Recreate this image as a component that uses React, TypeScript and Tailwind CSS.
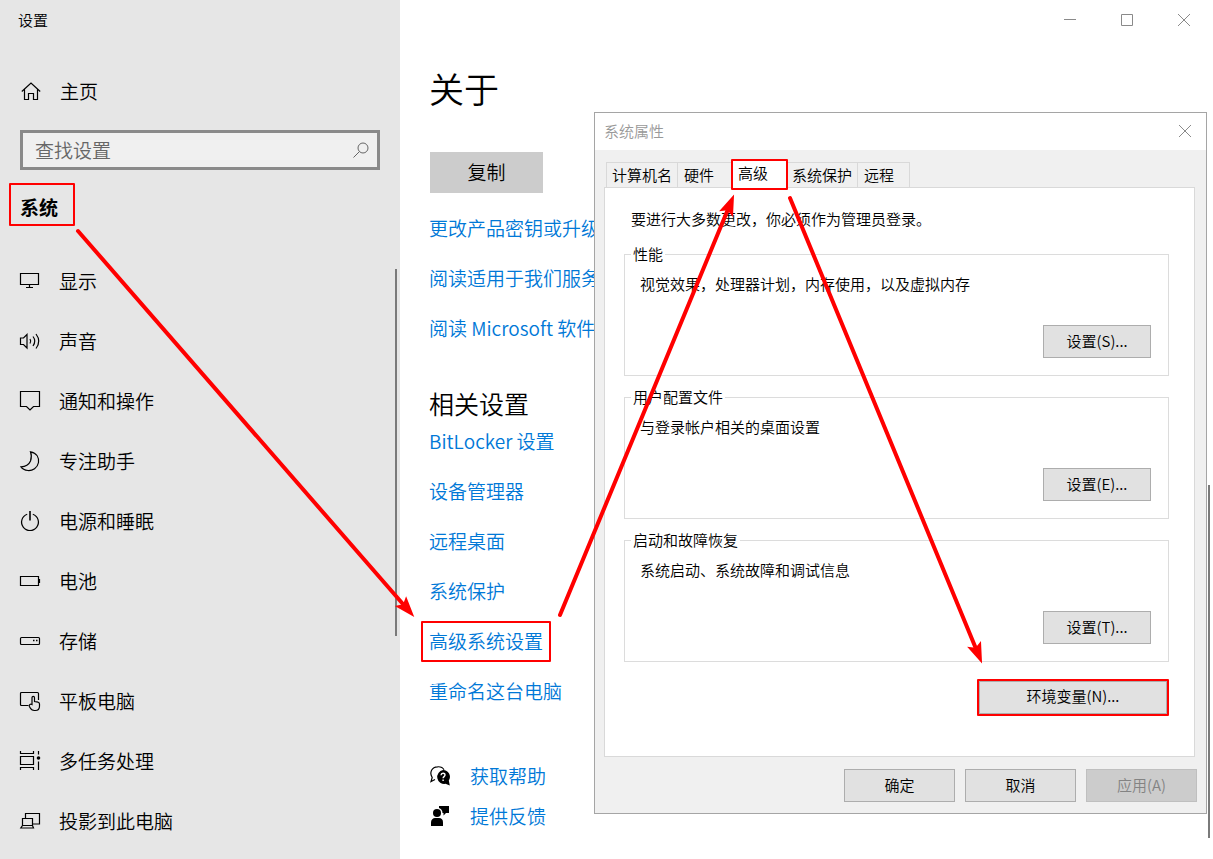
import type { ReactNode } from 'react';

const navItems: { label: string; icon: ReactNode }[] = [
  {
    label: '显示',
    icon: (
      <>
        <path d="M.5 2.500h18v11H.5z" />
        <path d="M9.500 13.500v3M6 16.500h7" />
      </>
    ),
  },
  {
    label: '声音',
    icon: (
      <>
        <path d="M.5 7v6.500h3L7 17V3.500L3.500 7z" />
        <path d="M10 8q1.500 2.200 0 4.500M13 5.500q3.500 4.500 0 9.500M16 3q5.500 7.200 0 14.500" />
      </>
    ),
  },
  { label: '通知和操作', icon: <path d="M.5.5h19v15h-6L10 19l-3.500-3.500h-6z" /> },
  {
    label: '专注助手',
    icon: (
      <path d="M10.500.8C17 2 19 7 18.500 11.500 17.500 17 12.500 19.800 8 19.500 5 19 2.500 18 1 15.800 6 15.800 9 13.500 10.500 10c1.300-3.300 1-6.500 0-9.200z" />
    ),
  },
  {
    label: '电源和睡眠',
    icon: (
      <>
        <path d="M7.200 3.200a8.400 8.400 0 1 0 5.600 0" />
        <path d="M10 0v9.500" strokeWidth="1.600" />
      </>
    ),
  },
  {
    label: '电池',
    icon: (
      <>
        <path d="M.5 5.500h18v9H.5z" />
        <path d="M19.500 8v4" />
      </>
    ),
  },
  {
    label: '存储',
    icon: (
      <>
        <rect x=".5" y="6.500" width="19" height="7" rx="1" />
        <path d="M13 9.500h1.500M16 9.500h1.500" strokeWidth="1.500" />
      </>
    ),
  },
  {
    label: '平板电脑',
    icon: (
      <>
        <path d="M8.500 14.500h-7a1 1 0 0 1-1-1v-11a1 1 0 0 1 1-1h16a1 1 0 0 1 1 1V9" />
        <path d="M12 13.500V6.800c0-1.900 2.500-1.900 2.500 0v3.700l3.600.7c1 .3 1.400.9 1.400 1.700v2.300c0 2.500-1.700 4.300-4.200 4.300h-1c-2 0-3.300-.9-4.200-2.700l-.8-1.600c-.5-1.500 1.200-2.500 2.700-1.700z" />
      </>
    ),
  },
  {
    label: '多任务处理',
    icon: (
      <>
        <path d="M.5 0v2.500h13V0M.5 5.500h13v8H.5zM.5 19v-2.500h13V19" />
        <path d="M18.500 0v3.500M18.500 10.500V19" />
        <circle cx="18.500" cy="7" r="1.800" fill="currentColor" stroke="none" />
      </>
    ),
  },
  {
    label: '投影到此电脑',
    icon: (
      <>
        <path d="M5.500 7.500v-5h14v10.500H13" />
        <path d="M2.500 14.500v-7H12.500v7M2.500 14.500h10l1 2.500H.8z" />
      </>
    ),
  },
];

const infoLinks = ['更改产品密钥或升级', '阅读适用于我们服务', '阅读 Microsoft 软件'];

const relatedLinks = ['BitLocker 设置', '设备管理器', '远程桌面', '系统保护', '高级系统设置', '重命名这台电脑'];

const groups = [
  { title: '性能', text: '视觉效果，处理器计划，内存使用，以及虚拟内存', button: '设置(S)...' },
  { title: '用户配置文件', text: '与登录帐户相关的桌面设置', button: '设置(E)...' },
  { title: '启动和故障恢复', text: '系统启动、系统故障和调试信息', button: '设置(T)...' },
];

function LineIcon({ children }: { children: ReactNode }) {
  return (
    <svg
      className="h-5 w-5 shrink-0 overflow-visible"
      viewBox="0 0 20 20"
      fill="none"
      stroke="currentColor"
      strokeWidth="1.200"
      aria-hidden="true"
    >
      {children}
    </svg>
  );
}

function CloseIcon() {
  return (
    <svg className="h-3 w-3" viewBox="0 0 12 12" fill="none" stroke="#8a8a8a" aria-hidden="true">
      <path d="M0 0l12 12M12 0L0 12" />
    </svg>
  );
}

function Sidebar() {
  return (
    <aside className="relative w-[400px] shrink-0 bg-[#e6e6e6]">
      <div className="flex h-10 items-center px-[18px] text-[15px]">设置</div>

      <a href="#home" className="mt-[21px] flex h-[60px] items-center gap-[19px] px-[21px]">
        <LineIcon>
          <path d="M.8 10.500 10 2l9.200 8.500M3.500 8.500v10h4V12.500h5v6h4v-10" />
        </LineIcon>
        主页
      </a>

      <div className="relative mx-5 mt-[9px]">
        <input
          id="search"
          type="text"
          placeholder="查找设置"
          className="block h-10 w-full border-3 border-[#8a8a8a] bg-[#f0f0f0] px-3 pb-[2px] placeholder:text-[#666] focus:outline-none"
        />
        <label htmlFor="search" aria-label="查找设置" className="absolute top-3 right-[11px]">
          <svg className="h-4 w-4" viewBox="0 0 16 16" fill="none" stroke="#666" aria-hidden="true">
            <circle cx="10" cy="6" r="5" />
            <path d="M6.500 9.500.5 15.500" />
          </svg>
        </label>
      </div>

      <h2 className="mt-[13px] mb-[25px] ml-[9px] flex h-[43px] w-[66px] items-center rounded-[1px] border-2 border-[#f00] px-[9px] pt-1 font-bold">
        系统
      </h2>

      <nav>
        {navItems.map((item) => (
          <a key={item.label} href="#nav" className="flex h-[60px] items-center gap-[19px] px-5">
            <LineIcon>{item.icon}</LineIcon>
            {item.label}
          </a>
        ))}
      </nav>

      {/* Scroll thumb */}
      <div className="absolute top-[269px] right-[3px] h-[367px] w-0.5 bg-[#7a7a7a]" />
    </aside>
  );
}

function SystemDialog() {
  return (
    <section
      aria-label="系统属性"
      className="absolute top-[112px] right-[6px] left-[194px] border border-[#a5a5a5] bg-[#f0f0f0] text-[15px] leading-5"
    >
      <div className="flex h-[37px] items-center justify-between bg-white pr-[15px] pb-[2px] pl-[9px] text-[#999]">
        系统属性
        <button type="button" aria-label="关闭">
          <CloseIcon />
        </button>
      </div>

      <div className="mt-[9px] flex h-7 items-end px-[11px]">
        <button type="button" className="h-[25px] w-[72px] border border-b-0 border-[#d9d9d9] pb-px whitespace-nowrap">
          计算机名
        </button>
        <button type="button" className="h-[25px] w-[53px] border-t border-[#d9d9d9] pb-px pl-[6px] text-left">
          硬件
        </button>
        <button
          type="button"
          className="relative -mb-[3px] h-[31px] w-[57px] rounded-[1px] border-2 border-[#f00] bg-white pb-[3px] pl-[5px] text-left"
        >
          高级
        </button>
        <button
          type="button"
          className="h-[25px] w-[70px] border-t border-r border-[#d9d9d9] pb-px pl-1 text-left whitespace-nowrap"
        >
          系统保护
        </button>
        <button type="button" className="h-[25px] w-[52px] border-t border-r border-[#d9d9d9] pb-px pl-[6px] text-left">
          远程
        </button>
      </div>

      <div className="mr-[11px] ml-[9px] border border-[#d9d9d9] bg-white pt-[21px] pr-[25px] pb-10 pl-[19px]">
        <p className="px-[7px]">要进行大多数更改，你必须作为管理员登录。</p>

        <div className="mt-[15px] flex flex-col gap-[11px]">
          {groups.map((group) => (
            <fieldset key={group.title} className="h-[132px] border border-[#dcdcdc]">
              <legend className="ml-[6px] px-[2px]">{group.title}</legend>
              <div className="flex flex-col pt-[10px] pr-[17px] pl-[15px]">
                <p>{group.text}</p>
                <button
                  type="button"
                  className="mt-[31px] h-[33px] w-[108px] self-end border border-[#adadad] bg-[#e1e1e1] pb-[2px]"
                >
                  {group.button}
                </button>
              </div>
            </fieldset>
          ))}
        </div>

        <div className="mt-[17px] ml-auto w-[192px] rounded-[1px] border-2 border-[#f00]">
          <button type="button" className="block h-[33px] w-full border border-[#adadad] bg-[#e1e1e1] pb-[3px]">
            环境变量(N)...
          </button>
        </div>
      </div>

      <div className="flex justify-end gap-[10px] pt-3 pr-[9px] pb-[11px]">
        <button type="button" className="h-[33px] w-[111px] border border-[#adadad] bg-[#e1e1e1] pb-[2px]">
          确定
        </button>
        <button type="button" className="h-[33px] w-[111px] border border-[#adadad] bg-[#e1e1e1] pb-[2px]">
          取消
        </button>
        <button
          type="button"
          disabled
          className="h-[33px] w-[111px] border border-[#bfbfbf] bg-[#ccc] pb-[2px] text-[#838383]"
        >
          应用(A)
        </button>
      </div>
    </section>
  );
}

export default function App() {
  return (
    <div className="relative flex min-h-screen overflow-hidden bg-white font-['Noto_Sans_CJK_SC',sans-serif] text-[19px] leading-6 font-[350] text-black">
      <Sidebar />

      <main className="relative min-w-0 flex-1 pb-[22px]">
        {/* Window controls */}
        <div className="flex h-10 items-center justify-end gap-[45px] pr-[23px]">
          <button type="button" aria-label="最小化">
            <svg className="h-3 w-3" viewBox="0 0 12 12" stroke="#8a8a8a" aria-hidden="true">
              <path d="M0 5.500h12" />
            </svg>
          </button>
          <button type="button" aria-label="最大化">
            <svg className="h-3 w-3" viewBox="0 0 12 12" fill="none" stroke="#8a8a8a" aria-hidden="true">
              <path d="M.5.5h11v11H.5z" />
            </svg>
          </button>
          <button type="button" aria-label="关闭">
            <CloseIcon />
          </button>
        </div>

        <div className="px-[29px]">
          <h1 className="mt-6 text-[35px] leading-12">关于</h1>
          <button type="button" className="mt-10 mb-[10px] ml-px block h-[41px] w-[113px] bg-[#ccc] pb-[2px]">
            复制
          </button>

          {infoLinks.map((label) => (
            <a key={label} href="#info" className="flex h-[50px] items-center whitespace-nowrap text-[#0078d7]">
              {label}
            </a>
          ))}

          <h2 className="mt-[37px] text-[25px] leading-[26px]">相关设置</h2>
          {relatedLinks.map((label) => (
            <div key={label} className="flex h-[50px] items-center">
              <a href="#related" className="relative whitespace-nowrap text-[#0078d7]">
                {label}
                {label === '高级系统设置' && (
                  <span className="absolute -inset-x-2 -top-2 -bottom-[9px] rounded-[1px] border-2 border-[#f00]" />
                )}
              </a>
            </div>
          ))}

          <a href="#help" className="mt-10 flex h-10 items-center gap-5 text-[#0078d7]">
            <svg className="ml-px h-5 w-5 overflow-visible text-black" viewBox="0 0 20 20" aria-hidden="true">
              <path
                d="M5 13.500 1 15.500l1.200-4C-1 6.500 2 1 7.500.8c3-.2 5.500 1 6.500 3"
                fill="none"
                stroke="currentColor"
                strokeWidth="1.200"
              />
              <path d="M13 4a6.800 6.800 0 0 1 5.800 10.500l1 5-4.300-1.700A7 7 0 1 1 13 4z" fill="currentColor" />
              <path
                d="M11 9.200c.2-2.600 4-2.600 4-.2 0 1.600-1.900 1.600-1.900 3.200M13.100 13.400v1.600"
                fill="none"
                stroke="#fff"
                strokeWidth="1.400"
              />
            </svg>
            获取帮助
          </a>
          <a href="#feedback" className="flex h-10 items-center gap-5 text-[#0078d7]">
            <svg className="ml-px h-5 w-5 text-black" viewBox="0 0 20 20" fill="currentColor" aria-hidden="true">
              <circle cx="7" cy="7" r="4" />
              <path d="M1 20v-3.500C1 13.500 3 12 5 12h4c2.500 0 4 1.500 4 4.500V20z" />
              <path d="M9 0h10v7h-3l-2.500 2.500V7H12.500C12.500 4.500 11 2.500 9 2z" />
            </svg>
            提供反馈
          </a>
        </div>

        {/* Scroll thumb */}
        <div className="absolute top-[485px] right-[3px] h-[353px] w-0.5 bg-[#7a7a7a]" />

        <SystemDialog />
      </main>

      {/* Step arrows */}
      <svg
        className="pointer-events-none absolute inset-0 h-full w-full"
        fill="none"
        stroke="#f00"
        strokeWidth="4"
        strokeLinecap="round"
        aria-hidden="true"
      >
        <defs>
          <marker id="head" markerUnits="userSpaceOnUse" markerWidth="24" markerHeight="20" refX="14" refY="10" orient="auto">
            <path d="M22 10 1 2.500l4 7.500-4 7.500z" fill="#f00" stroke="none" />
          </marker>
        </defs>
        <path d="M78 231 409 611" markerEnd="url(#head)" />
        <path d="M560 615 731 202" markerEnd="url(#head)" />
        <path d="M790 198 979 656" markerEnd="url(#head)" />
      </svg>
    </div>
  );
}
